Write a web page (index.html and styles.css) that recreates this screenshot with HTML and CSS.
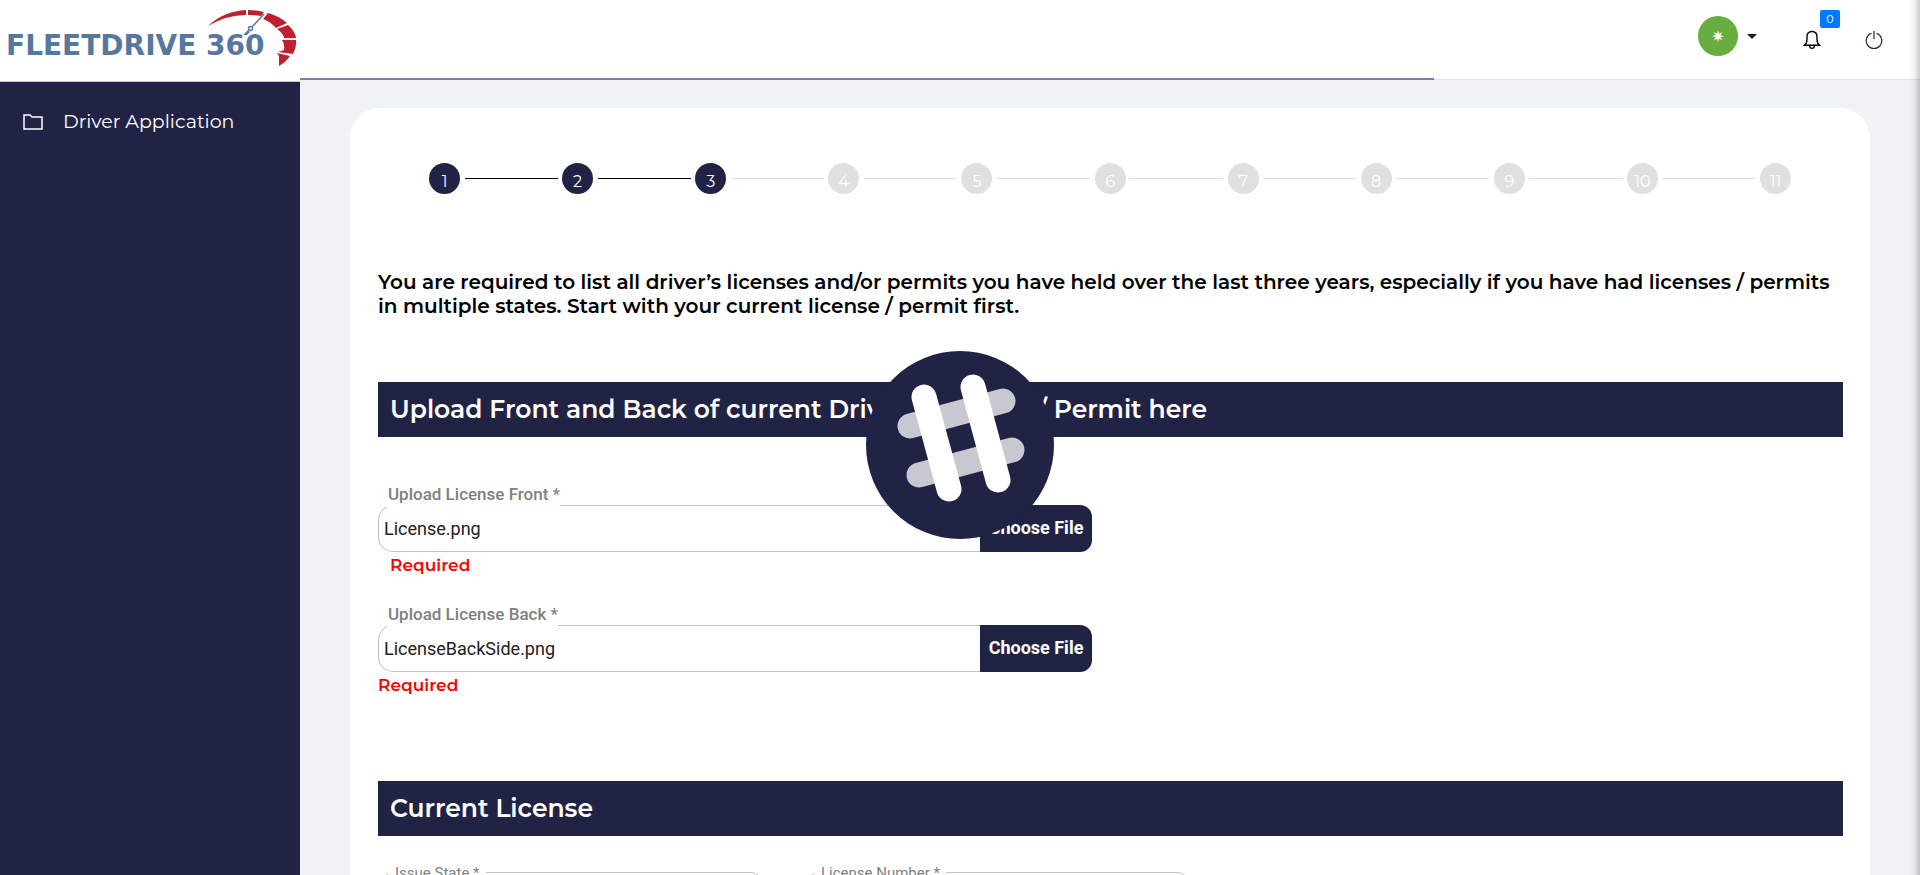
FILE: index.html
```html
<!DOCTYPE html>
<html lang="en">
<head>
<meta charset="utf-8">
<title>FleetDrive 360 - Driver Application</title>
<link rel="stylesheet" href="styles.css">
</head>
<body>
<div class="app">
  <aside class="sidebar">
    <a class="brand" href="#" aria-label="FleetDrive 360">
      <svg width="300" height="80" viewBox="0 0 300 80">
        <text class="brand-name" x="6" y="55">FLEETDRIVE 360</text>
        <path fill="#bf1f2e" d="M208 26Q224 11 246 10V15Q226 15 208 26ZM248 10Q258 10 264 12L261 16Q255 15 248 15ZM268 13Q279 16 287 23L276 28Q271 22 263 19ZM288 25Q295 31 296 38L284 38Q283 33 277 29L288 25ZM296 40Q297 47 293 54L278 52L284 50Q285 44 282 40ZM290 56Q286 62 279 66V56L277 53Z"/>
        <path fill="none" stroke="#56789f" stroke-width="1.500" d="M264 14L252 27"/>
        <path fill="#56789f" d="M248 30L250 32L247 35H243Z"/>
        <circle cx="250.500" cy="28.500" r="2" fill="#fff" stroke="#56789f" stroke-width="1.500"/>
      </svg>
    </a>
    <nav class="menu">
      <a class="menu-item" href="#">
        <svg width="22" height="18" viewBox="0 0 22 18" fill="none" stroke="#fff" stroke-width="1.500"><path d="M2 2H8L10 4H20V16H2Z"/></svg>
        <span>Driver Application</span>
      </a>
    </nav>
  </aside>
  <div class="page">
    <header class="topbar">
      <button class="profile" aria-label="Account menu">
        <span class="avatar">✷</span><span class="caret"></span>
      </button>
      <button class="icon-btn bell" aria-label="Notifications">
        <svg width="18" height="20" viewBox="0 0 18 20" fill="none" stroke="#000" stroke-width="1.400"><path d="M1.500 15.300Q4 13.500 4 9V7Q4 1.500 9 1.500T14 7V9Q14 13.500 16.500 15.300ZM6.500 15.500Q6.800 18.400 9 18.400T11.500 15.500"/></svg>
        <span class="badge">0</span>
      </button>
      <button class="icon-btn" aria-label="Log out">
        <svg width="18" height="20" viewBox="0 0 18 20" fill="none" stroke="#212344" stroke-width="1.200"><path d="M9 1V9M6.500 3.300A7.800 7.800 0 1 0 11.500 3.300"/></svg>
      </button>
      <div class="progress"></div>
    </header>
    <main class="content">
      <section class="card">
        <ol class="steps">
          <li class="step done"><span>1</span></li>
          <li class="step done"><span>2</span></li>
          <li class="step active"><span>3</span></li>
          <li class="step"><span>4</span></li>
          <li class="step"><span>5</span></li>
          <li class="step"><span>6</span></li>
          <li class="step"><span>7</span></li>
          <li class="step"><span>8</span></li>
          <li class="step"><span>9</span></li>
          <li class="step"><span>10</span></li>
          <li class="step"><span>11</span></li>
        </ol>
        <p class="intro">You are required to list all driver’s licenses and/or permits you have held over the last three years, especially if you have had licenses / permits in multiple states. Start with your current license / permit first.</p>
        <h2 class="banner">Upload Front and Back of current Driver’s License / Permit here</h2>
        <div class="uploads">
          <div class="upload">
            <label for="front">Upload License Front *</label>
            <div class="file-row"><input id="front" type="text" value="License.png" readonly><button>Choose File</button></div>
            <p class="error indented">Required</p>
          </div>
          <div class="upload">
            <label for="back">Upload License Back *</label>
            <div class="file-row"><input id="back" type="text" value="LicenseBackSide.png" readonly><button>Choose File</button></div>
            <p class="error">Required</p>
          </div>
        </div>
        <h2 class="banner">Current License</h2>
        <div class="fields">
          <div class="field"><label for="state">Issue State *</label><input id="state" type="text"></div>
          <div class="field"><label for="number">License Number *</label><input id="number" type="text"></div>
        </div>
      </section>
    </main>
  </div>
</div>
<div class="edge-shadow"></div>
<div class="loader" role="status" aria-label="Loading">
  <svg width="188" height="188" viewBox="0 0 188 188" fill="none" stroke-width="25" stroke-linecap="round">
    <circle cx="94" cy="94" r="94" fill="#212344"/>
    <path stroke="#c8c8d0" d="M44 75L137 50M53 124L146 99"/>
    <path stroke="#fff" d="M58 46L83 138M107 36L132 129"/>
  </svg>
</div>
</body>
</html>
```
FILE: styles.css
```css
* { box-sizing: border-box; }
body {
  margin: 0;
  height: 100vh;
  overflow: hidden;
  background: #eff3f6;
  color: #000;
  font-family: Montserrat, Inter, sans-serif;
}
button, input { font: inherit; }
button { border: 0; padding: 0; background: none; cursor: pointer; }

.app { display: flex; height: 100vh; overflow: hidden; }
.sidebar { flex: 0 0 300px; background: #212344; }
.brand { display: block; height: 82px; background: #fff; border-bottom: 1px solid #c9c9d4; }
.brand svg { display: block; }
.brand-name { font: bold 28px "DejaVu Sans", sans-serif; fill: #56789f; }
.menu { padding-top: 28px; }
.menu-item {
  display: flex;
  align-items: center;
  gap: 19px;
  padding: 0 22px;
  color: #fff;
  font-size: 19px;
  line-height: 24px;
  text-decoration: none;
}

.page { flex: 1; min-width: 0; }
.topbar {
  position: relative;
  display: flex;
  justify-content: flex-end;
  height: 80px;
  padding: 16px 37px 0 0;
  background: #fff;
  border-bottom: 1px solid #dde3e8;
}
.progress { position: absolute; left: 0; bottom: -1px; width: 70%; height: 2px; background: #7b7bad; }
.profile { display: flex; align-items: center; gap: 9px; height: 40px; margin-right: 46px; }
.avatar {
  display: flex;
  align-items: center;
  justify-content: center;
  width: 40px;
  height: 40px;
  border-radius: 50%;
  background: #68ad3f;
  color: #fff;
  font: 16px "DejaVu Sans", sans-serif;
}
.caret { border: 5px solid transparent; border-top-color: #1b1b1b; border-bottom: 0; }
.icon-btn { position: relative; width: 18px; height: 20px; margin-top: 14px; }
.icon-btn svg { display: block; }
.bell { margin-right: 44px; }
.badge {
  position: absolute;
  left: 17px;
  bottom: 22px;
  width: 20px;
  height: 18px;
  border-radius: 2px;
  background: #007bff;
  color: #fff;
  font-size: 11px;
  line-height: 18px;
}

.content { padding: 28px 50px; }
.card { padding: 55px 27px 0 28px; border-radius: 30px; background: #fff; }
.steps { display: flex; margin: 0; padding: 0 1px 0 0; list-style: none; }
.step { position: relative; flex: 1; display: flex; justify-content: center; }
.step span {
  width: 31px;
  height: 31px;
  border-radius: 50%;
  background: #e0e0e0;
  color: #fff;
  font-size: 16px;
  line-height: 37px;
  text-align: center;
}
.step:not(:last-child)::after {
  content: "";
  position: absolute;
  top: 15px;
  left: calc(50% + 20px);
  right: calc(20px - 50%);
  height: 1px;
  background: #e0e0e0;
}
.step.done span, .step.active span { background: #212344; }
.step.done:not(:last-child)::after { background: #000; }
.intro { margin: 76px 0 64px; font-size: 20px; font-weight: 600; line-height: 24px; }
.banner {
  margin: 0;
  padding: 0 12px;
  background: #212344;
  color: #fff;
  font-size: 25px;
  font-weight: 600;
  line-height: 55px;
}
.uploads { width: 714px; padding: 46px 0 66px; }
.upload { height: 120px; font-family: Roboto, sans-serif; }
.upload:last-child { height: 112px; }
.upload label {
  position: relative;
  display: block;
  width: fit-content;
  margin: 0 0 -3px 9px;
  padding: 0 0 3px 1px;
  background: #fff;
  color: #7f7f7f;
  font-size: 17px;
  font-weight: 500;
  line-height: 22px;
}
.file-row { display: flex; height: 47px; }
.file-row input {
  flex: 1;
  min-width: 0;
  padding: 0 5px;
  border: 1px solid #c2c2c2;
  border-right: 0;
  border-radius: 15px 0 0 15px;
  background: #fff;
  color: #212121;
  font-size: 18px;
}
.file-row button {
  width: 112px;
  padding-bottom: 2px;
  border-radius: 0 12px 12px 0;
  background: #212344;
  color: #fff;
  font-size: 18px;
  font-weight: 700;
}
.error { margin: 2px 0 0; color: #f00; font: 600 17px/22px Montserrat, Inter, sans-serif; }
.indented { padding-left: 12px; }
.fields { display: flex; gap: 44px; padding: 28px 0 0 3px; }
.field { width: 382px; font-family: Roboto, sans-serif; }
.field label {
  position: relative;
  display: block;
  width: fit-content;
  margin: 0 0 -10px 8px;
  padding: 0 6px;
  background: #fff;
  color: #7f7f7f;
  font-size: 15px;
  line-height: 18px;
}
.field input { width: 100%; height: 48px; border: 1px solid #c2c2c2; border-radius: 12px; }

.edge-shadow {
  position: fixed;
  inset: 0 0 0 auto;
  width: 12px;
  background: linear-gradient(to right, rgba(0, 0, 0, 0), rgba(0, 0, 0, 0.04) 50%, rgba(0, 0, 0, 0.2));
  pointer-events: none;
}
.loader { position: fixed; inset: 0; display: grid; place-items: center; padding-top: 14px; pointer-events: none; }
.loader svg { display: block; }
```
